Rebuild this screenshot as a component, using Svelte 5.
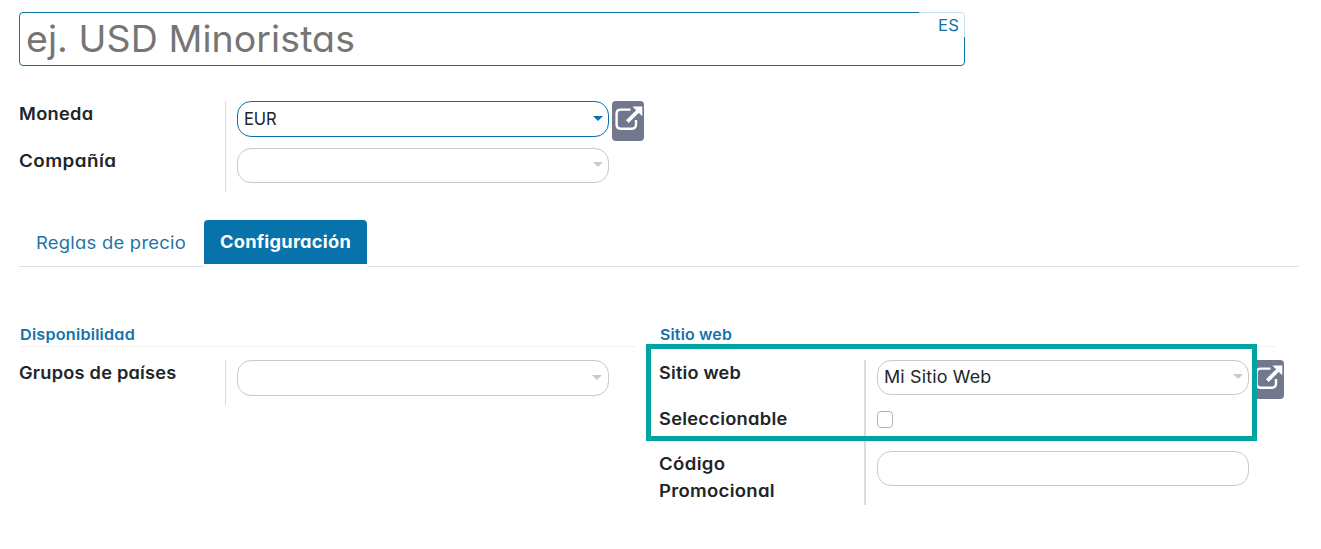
<script>
  // Widens a text to the given width, partly by letter spacing, mostly by the letter shapes.
  function fit(node, width) {
    const natural = node.getBoundingClientRect().width;
    const spacing = ((width - natural) * 0.25) / node.textContent.length;
    node.style.letterSpacing = `${spacing}px`;
    node.style.transform = `scaleX(${width / node.getBoundingClientRect().width})`;
  }
</script>

{#snippet text(value, width)}<span class="text" use:fit={width}>{value}</span>{/snippet}

{#snippet external()}
  <button class="external" aria-label="Enlace externo">
    <svg width="32" height="36" viewBox="0 0 32 36" fill="none">
      <path d="M18.5 8.6H8.2A3.8 3.8 0 0 0 4.6 12.2V24A3.8 3.8 0 0 0 8.2 27.7H20.3A3.8 3.8 0 0 0 24 24V19" stroke="#fff" stroke-width="2.4" />
      <path d="M15.3 20.7L26 10" stroke="#fff" stroke-width="3.8" />
      <path d="M20.3 5.6H30.3V15.3Z" fill="#fff" />
    </svg>
  </button>
{/snippet}

{#snippet select(value, width, kind)}
  <div class="field {kind}">
    {#if value}{@render text(value, width)}{/if}
    <i class="caret"></i>
  </div>
{/snippet}

<main>
  <header class="title">
    {@render text('ej. USD Minoristas', 329)}
    <span class="lang">{@render text('ES', 21)}</span>
  </header>

  <section class="group general">
    <div class="labels">
      <div class="label first">{@render text('Moneda', 74.5)}</div>
      <div class="label">{@render text('Compañía', 97.5)}</div>
    </div>
    <div class="values">
      <div class="row">{@render select('EUR', 32.5, 'active')}{@render external()}</div>
      <div class="row">{@render select('', 0, 'short')}</div>
    </div>
  </section>

  <nav>
    <div class="line lead"><span class="tab">{@render text('Reglas de precio', 150)}</span></div>
    <div class="tab current">{@render text('Configuración', 131)}</div>
    <div class="line rest"></div>
  </nav>

  <div class="columns">
    <section>
      <h2>{@render text('Disponibilidad', 115)}</h2>
      <div class="group countries">
        <div class="labels"><div class="label">{@render text('Grupos de países', 157.5)}</div></div>
        <div class="values"><div class="row">{@render select('', 0, 'offset')}</div></div>
      </div>
    </section>

    <section class="web">
      <h2>{@render text('Sitio web', 72)}</h2>
      <div class="group website">
        <div class="labels">
          <div class="label">{@render text('Sitio web', 82)}</div>
          <div class="label selectable">{@render text('Seleccionable', 128.5)}</div>
          <div class="label">{@render text('Código', 66.5)}<br />{@render text('Promocional', 116)}</div>
        </div>
        <div class="values">
          <div class="row">{@render select('Mi Sitio Web', 107.5, 'short')}{@render external()}</div>
          <div class="check"></div>
          <div class="field short"></div>
        </div>
      </div>
      <div class="highlight"></div>
    </section>
  </div>
</main>

<style>
  :global(body) { margin: 0; background: #fff; }
  main {
    box-sizing: border-box;
    width: 1321px;
    height: 549px;
    padding: 12px 22px 0 19px;
    overflow: hidden;
    font: 400 17px/27px Inter, sans-serif;
    font-feature-settings: "cv11";
    color: #212529;
  }
  .text { display: inline-block; white-space: nowrap; transform-origin: 0 50%; }
  .title {
    position: relative;
    box-sizing: border-box;
    width: 946px;
    height: 54px;
    padding-left: 6px;
    border: 1px solid #0872aa;
    border-radius: 4px;
    font-size: 37px;
    line-height: 52px;
    color: #757575;
  }
  .lang {
    position: absolute;
    top: -1px;
    right: -1px;
    box-sizing: border-box;
    width: 46px;
    height: 25px;
    padding-left: 19px;
    background: rgba(255, 255, 255, 0.78);
    font-size: 16px;
    line-height: 26px;
    color: #1670a8;
  }
  .group { display: grid; grid-template-columns: 206px 1fr; }
  .general { height: 91px; margin-top: 35px; }
  .labels { font-weight: 600; }
  .values { padding-left: 11px; border-left: 1px solid #dcdcdc; }
  .general .first { margin-bottom: 20px; }
  .row { display: flex; gap: 3px; height: 47px; }
  .general .row:last-child, .countries .row { height: 44px; }
  .field {
    box-sizing: border-box;
    display: flex;
    align-items: center;
    justify-content: space-between;
    width: 372px;
    height: 36px;
    padding: 0 5px 0 6px;
    border: 1px solid #c9c9cb;
    border-radius: 14px;
    font-size: 17px;
    font-weight: 370;
    color: #212529;
  }
  .active { border-color: #0872aa; }
  .short { height: 35px; }
  .caret {
    width: 0;
    height: 0;
    margin: 0 0 1px auto;
    border: 5.5px solid transparent;
    border-top: 5px solid #c9c9cb;
    border-bottom: 0;
  }
  .active .caret { border-top-color: #0872aa; }
  .offset .caret { margin-right: 1px; }
  .short .caret { margin-bottom: 2px; }
  .external {
    width: 32px;
    height: 40px;
    padding: 0;
    border: 0;
    border-radius: 4px;
    background: #71778c;
  }
  .external svg { display: block; margin-bottom: 4px; }
  nav {
    display: grid;
    grid-template-columns: 185px 163px 1fr;
    width: 1280px;
    height: 47px;
    margin-top: 28px;
    color: #2472a8;
  }
  .line { box-sizing: border-box; border-bottom: 1px solid #dee2e6; }
  .lead { padding: 10px 0 0 17px; font-weight: 370; }
  .current {
    height: 44px;
    box-sizing: border-box;
    padding: 9px 0 0 16px;
    border-radius: 4px 4px 0 0;
    background: #0872aa;
    color: #fff;
    font-weight: 700;
  }
  .columns { display: grid; grid-template-columns: 640px 1fr; margin-top: 55px; }
  .web { position: relative; }
  h2 {
    box-sizing: border-box;
    width: 616px;
    height: 25px;
    margin: 0 0 13px 1px;
    border-bottom: 1px solid #f2f2f3;
    font-size: 15px;
    line-height: 25px;
    font-weight: 600;
    color: #1372a9;
  }
  .countries { height: 45px; }
  .website { height: 145px; grid-template-columns: 205px 1fr; }
  .website .values { border-left-width: 2px; }
  .website .row { height: 51px; }
  .website .external { height: 39px; }
  .selectable { margin: 19px 0 18px; }
  .check {
    box-sizing: border-box;
    width: 16px;
    height: 17px;
    margin-bottom: 23px;
    border: 1px solid #adb2bd;
    border-radius: 4px;
  }
  .highlight {
    position: absolute;
    left: -13px;
    top: 22px;
    box-sizing: border-box;
    width: 611px;
    height: 97px;
    border: 5px solid #00a5a3;
  }
</style>
